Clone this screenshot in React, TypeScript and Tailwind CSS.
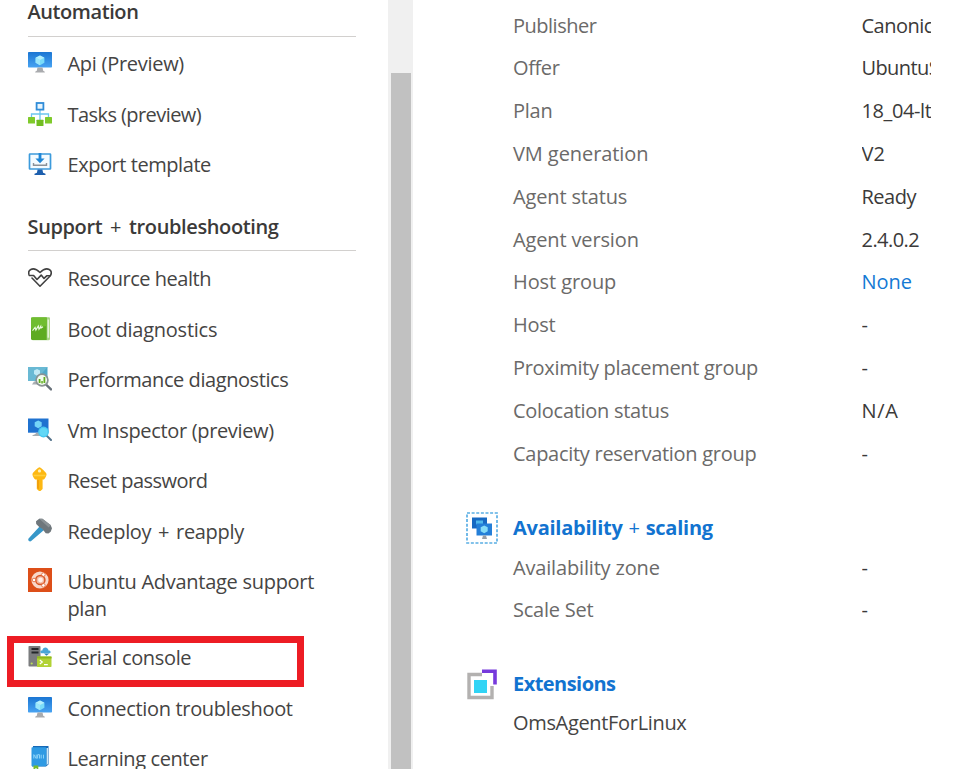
import type { ReactNode } from "react";

const svg = "mt-px h-6 w-6 shrink-0";

function MonitorIcon() {
  return (
    <svg className={svg} viewBox="0 0 24 24">
      <defs>
        <linearGradient id="screen" x1="0" y1="0" x2="0" y2="1">
          <stop offset="0" stopColor="#1b76d3" />
          <stop offset="1" stopColor="#48a3f2" />
        </linearGradient>
      </defs>
      <rect y="1" width="24" height="15.5" rx=".7" fill="url(#screen)" />
      <path d="M12 4.4l4.4 2.3v5L12 14.2l-4.4-2.5v-5z" fill="#7adcf9" />
      <path d="M7.6 6.7L12 9l4.4-2.3L12 4.4z" fill="#b4effd" />
      <path d="M12 9v5.2l-4.4-2.5v-5z" fill="#9be6fb" />
      <path d="M9.5 16.5h5l.7 3.3 1.6.9v.8H7.2v-.8l1.6-.9z" fill="#a9abae" />
    </svg>
  );
}

function TasksIcon() {
  return (
    <svg className={svg} viewBox="0 0 24 24">
      <path d="M12 8v10M3.5 16v-4h17v4" fill="none" stroke="#6cc6ee" strokeWidth="1.3" />
      <rect x="8.6" y="1" width="6.8" height="6.6" fill="#e8f5fd" stroke="#2f8cd8" strokeWidth="1.8" />
      <rect x="0" y="15" width="7" height="6.5" rx=".5" fill="#7fca2b" />
      <rect x="17" y="15" width="7" height="6.5" rx=".5" fill="#7fca2b" />
      <rect x="8.5" y="17.7" width="7" height="6.3" rx=".5" fill="#72bd22" />
    </svg>
  );
}

function ExportIcon() {
  return (
    <svg className={svg} viewBox="0 0 24 24">
      <rect x="1.5" y="2" width="21" height="15" rx=".5" fill="#f4fbff" stroke="#3c9bdc" strokeWidth="1.7" />
      <path d="M10.6 1h2.8v5.5h3.2L12 11.2 7.4 6.5h3.2z" fill="#1f86d6" />
      <path d="M5.5 11v2.3h13V11" fill="none" stroke="#8b9198" strokeWidth="1.4" />
      <path d="M9.6 17.5h4.8l.7 3.3 2.4 1V23h-11v-1.2l2.4-1z" fill="#1d5fae" />
    </svg>
  );
}

function HealthIcon() {
  return (
    <svg className={svg} viewBox="0 0 24 24" fill="none" stroke="#404040" strokeWidth="1.6" strokeLinejoin="round" strokeLinecap="round">
      <path d="M.9 8.200C.3 6.200 1 4.400 2.800 3.500c2.700-1.400 5.500-.6 9.200 3 3.700-3.600 6.500-4.400 9.200-3 2.500 1.300 3 4.500.2 7.300L12 20.200l-8-8.200" />
      <path d="M1.200 9.500h4.400l3.400 4 4.200-4.400 2.800 3.300 2.700-2.600h3.400" />
    </svg>
  );
}

function BootIcon() {
  return (
    <svg className={svg} viewBox="0 0 24 24">
      <path d="M4.5.2H21a1 1 0 011 1v20.500a1.500 1.500 0 01-1.500 1.500h-16z" fill="#a8d586" />
      <path d="M19.500 2.500h1.600v18.200h-1.600z" fill="#e4f3d7" />
      <path d="M3 1.700c0-.7.5-1.200 1.200-1.200h14.500v22.500H4.200c-.7 0-1.200-.5-1.200-1.200z" fill="#5dab20" />
      <path d="M3 12V1.700C3 1 3.500.5 4.200.5h14.500V9z" fill="#70bd30" />
      <path d="M4.500 13.600l2.600-3.200.8 2.700 2.400-4.100.7 3.300 1.800-3 .2 1.800 2-1.400" fill="none" stroke="#eefae4" strokeWidth="1.100" />
    </svg>
  );
}

function PerformanceIcon() {
  return (
    <svg className={svg} viewBox="0 0 24 24">
      <path d="M0 0h19.500v14H0z" fill="#4fa9c9" />
      <path d="M0 0h19.500L7 14H0z" fill="#69b9d4" />
      <path d="M9 2l3 1.600v3.500L9 8.700 6 7.100V3.600z" fill="#c0e9f5" />
      <path d="M4 17.500h6v-3H6z" fill="#a9afb3" />
      <path d="M17.500 17l5.500 5.400" stroke="#68717a" strokeWidth="2.400" strokeLinecap="round" />
      <circle cx="14" cy="13" r="5.900" fill="#f2fbef" stroke="#8b9395" strokeWidth="1.700" />
      <path d="M10.700 12h1.800v4h-1.800zM13.300 14h1.500v2.500h-1.500zM15.500 10h1.800v6h-1.800z" fill="#62ae22" />
    </svg>
  );
}

function InspectorIcon() {
  return (
    <svg className={svg} viewBox="0 0 24 24">
      <path d="M0 .5h20.500v14.200H0z" fill="#1f72d0" />
      <path d="M10.200 2.500l3.500 1.800v4l-3.500 2-3.500-2v-4z" fill="#74d3f7" />
      <path d="M8 14.700h5v2.500l1 .8H4.500v-.7L7.500 16z" fill="#a5acb2" />
      <path d="M19 18l4 4" stroke="#52718a" strokeWidth="2" strokeLinecap="round" />
      <circle cx="15.500" cy="14" r="5.400" fill="#46c8f0" />
      <circle cx="15.500" cy="14" r="4" fill="#61d7f6" />
    </svg>
  );
}

function KeyIcon() {
  return (
    <svg className="h-6 w-6 shrink-0" viewBox="0 0 24 24">
      <path d="M11.500.3c1 0 6.800 5.300 7 6.700.2 1.500-1.500 4.800-2.500 5.500h-1.400v9.500L12.500 24H11l-2.200-2v-9.500H7.200c-1.200-.7-2.900-4-2.700-5.500C4.700 5.600 10.500.3 11.500.3z" fill="#fdb813" />
      <path d="M9 13h2v9.500L9 21z" fill="#f2a10b" />
      <path d="M5.500 8.500h12" stroke="#ffcf3d" strokeWidth="1.600" />
      <circle cx="11.500" cy="3.900" r="1.600" fill="#fff0b5" />
    </svg>
  );
}

function HammerIcon() {
  return (
    <svg className="h-6 w-6 shrink-0" viewBox="0 0 24 24">
      <path d="M12 8l4 4L3.200 23c-.8.700-1.900.4-2.500-.3s-.6-1.800.1-2.500z" fill="#3797c9" />
      <path d="M8 3.200L11.200.8l3.200-.1 8.200 6.400 1.400 3.200-1.300 3.500-2.300 1.700-2.700-.3-3.500-4.500-3-1.800-3-3z" fill="#6f777c" />
      <path d="M11.200.8l3.200-.1 8.200 6.400-1.800 2.400z" fill="#8b9296" />
    </svg>
  );
}

function UbuntuIcon() {
  return (
    <svg className="h-6 w-6 shrink-0" viewBox="0 0 24 24">
      <rect width="24" height="24" fill="#dd4f19" />
      <circle cx="12" cy="12" r="8.600" fill="#f8d8ca" />
      <circle cx="12.300" cy="12" r="4.600" fill="#f3b79f" stroke="#d95523" strokeWidth="1.500" />
      <circle cx="12.500" cy="12" r="2.400" fill="#fff0e9" />
      <g fill="#fff" stroke="#e1622f" strokeWidth=".8">
        <circle cx="6" cy="12" r="1.800" />
        <circle cx="15.400" cy="6.600" r="1.800" />
        <circle cx="15.400" cy="17.400" r="1.800" />
      </g>
    </svg>
  );
}

function SerialIcon() {
  return (
    <svg className={svg} viewBox="0 0 24 24">
      <rect x=".5" y="1" width="12" height="20.500" rx=".8" fill="#7b7c7e" />
      <path d="M3.500 3h7v2h-7zM3.500 6.500h7v2h-7z" fill="#25282b" />
      <circle cx="3.700" cy="18.500" r="1.100" fill="#b9e05a" />
      <path d="M13.500 8.200c-1.800-.6-1.300-3 .8-2.700.4-2.500 3.200-4 5.200-2 .8.700.9 1.500.9 2 2.500-.3 3 2.700 1 2.800z" fill="#4aa6d7" />
      <path d="M16 8.500l2.500 2.300 2.700-2.300" fill="#2b83ba" />
      <rect x="9" y="11.500" width="14.500" height="10.500" rx=".7" fill="#b2d235" />
      <path d="M9 11.500h14.500v2H9z" fill="#8eb91e" />
      <path d="M11.800 15l2.500 2-2.500 2M16 19.700h3.800" fill="none" stroke="#fff" strokeWidth="1.200" />
    </svg>
  );
}

function BookIcon() {
  return (
    <svg className={svg} viewBox="0 0 24 24">
      <path d="M5 0h15.500v18.500L18 20.500H4z" fill="#1769b6" />
      <path d="M18.500 2h1.500v16l-1.500 1.200z" fill="#cceafa" />
      <rect x="3.500" y="1.300" width="14.700" height="18.900" rx=".8" fill="#2f9ae3" />
      <path d="M5.800 12.500V8.600l2.400 3.900V8.600M9.600 12.500V8.700h1.900v3.800M13.200 8.700v3.800M15.500 8.700v3.800" fill="none" stroke="#8bd2f8" strokeWidth="1" />
      <path d="M5.500 19.500h4.800V24L8 22l-2.500 2z" fill="#76bc2d" />
    </svg>
  );
}

function AvailabilityIcon() {
  return (
    <svg className="h-8 w-8 shrink-0" viewBox="0 0 32 32">
      <rect x="1" y="1" width="30" height="30" fill="none" stroke="#59aee4" strokeWidth="1.700" strokeDasharray="3 1.620" />
      <path d="M6 5.500h15v11H6z" fill="#1769c2" />
      <path d="M10 8.500h7v4h-7z" fill="#51b9ec" />
      <path d="M10.500 11.500H26v12H10.500z" fill="#247fd8" />
      <path d="M18.200 13.500l3.500 1.800v4l-3.500 2-3.500-2v-4z" fill="#85dcf8" />
      <path d="M17 23.500h3l1 3.500h-5z" fill="#989ea5" />
    </svg>
  );
}

function ExtensionsIcon() {
  return (
    <svg className="h-8 w-8 shrink-0" viewBox="0 0 32 32">
      <path d="M16 6.500H3v23h23V18" fill="none" stroke="#b3b1b0" strokeWidth="3.400" />
      <path d="M16 3.200h13v13.300" fill="none" stroke="#773adc" strokeWidth="3.600" />
      <path d="M8 12h13v13H8z" fill="#32d4f5" />
    </svg>
  );
}

function Item({ icon, children, marked }: { icon: ReactNode; children: ReactNode; marked?: boolean }) {
  return (
    <li className="relative flex min-h-[50.5px] items-start pt-[11.5px]">
      {icon}
      <span className="ml-4 leading-[27px] whitespace-nowrap">{children}</span>
      {marked && <span className="absolute top-[3px] -left-[21px] h-[51px] w-[297px] border-7 border-[#ed1c24]" />}
    </li>
  );
}

function Heading({ children }: { children: ReactNode }) {
  return <h2 className="h-[37px] w-[328.5px] border-b-[1.5px] border-[#d2d0ce] font-semibold text-[#3b3a39]">{children}</h2>;
}

function Row({ label, value, track, vtrack = "", link }: { label: string; value: string; track: string; vtrack?: string; link?: boolean }) {
  return (
    <div className="flex h-[42.8px] items-center leading-[27px] whitespace-nowrap">
      <dt className={`w-[348.5px] shrink-0 text-[#6b6a69] ${track}`}>{label}</dt>
      <dd className={`w-[69.5px] overflow-hidden ${link ? "text-[#1479d4]" : "text-[#3b3a39]"} ${vtrack}`}>{value}</dd>
    </div>
  );
}

export default function App() {
  return (
    <div className="flex h-[769px] w-[974px] overflow-hidden bg-white font-['Open_Sans','Noto_Sans',sans-serif] text-[20px] text-[#454443]">
      <nav className="w-[388px] shrink-0 pl-[27.5px]">
        <Heading><span className="block leading-[24px] tracking-[-0.42px]">Automation</span></Heading>
        <ul className="pt-[1.5px]">
          <Item icon={<MonitorIcon />}><span className="tracking-[-0.28px]">Api (Preview)</span></Item>
          <Item icon={<TasksIcon />}><span className="tracking-[-0.57px]">Tasks (preview)</span></Item>
          <Item icon={<ExportIcon />}><span className="tracking-[-0.44px]">Export template</span></Item>
        </ul>
        <div className="pt-[23.5px]">
          <Heading>
            <span className="block leading-[25px] tracking-[-0.37px]">
              Support <span className="mx-[3px] font-normal">+</span> troubleshooting
            </span>
          </Heading>
        </div>
        <ul className="pt-[3px]">
          <Item icon={<HealthIcon />}><span className="tracking-[-0.48px]">Resource health</span></Item>
          <Item icon={<BootIcon />}><span className="tracking-[-0.25px]">Boot diagnostics</span></Item>
          <Item icon={<PerformanceIcon />}><span className="tracking-[-0.43px]">Performance diagnostics</span></Item>
          <Item icon={<InspectorIcon />}><span className="tracking-[-0.34px]">Vm Inspector (preview)</span></Item>
          <Item icon={<KeyIcon />}><span className="tracking-[-0.5px]">Reset password</span></Item>
          <Item icon={<HammerIcon />}>
            <span className="tracking-[-0.33px]">Redeploy <span className="mx-[2px]">+</span> reapply</span>
          </Item>
          <Item icon={<UbuntuIcon />}>
            <span className="block h-[64.5px]">
              <span className="tracking-[-0.28px]">Ubuntu Advantage support</span>
              <br />
              <span className="tracking-[-0.42px]">plan</span>
            </span>
          </Item>
          <Item icon={<SerialIcon />} marked><span className="tracking-[-0.34px]">Serial console</span></Item>
          <Item icon={<MonitorIcon />}><span className="tracking-[-0.33px]">Connection troubleshoot</span></Item>
          <Item icon={<BookIcon />}><span className="tracking-[-0.4px]">Learning center</span></Item>
        </ul>
      </nav>
      <div className="w-[25px] shrink-0 bg-[#f0f0f0] px-[2.5px] pt-[73px]">
        <div className="h-full bg-[#c1c1c1]" />
      </div>
      <main className="flex-1 pt-[3.8px] pl-[52.5px]">
        <dl className="pl-[47.5px]">
          <Row label="Publisher" track="tracking-[-0.5px]" value="Canonical" vtrack="tracking-[-0.5px]" />
          <Row label="Offer" track="tracking-[-0.38px]" value="UbuntuServer" vtrack="tracking-[-0.6px]" />
          <Row label="Plan" track="tracking-[-0.24px]" value="18_04-lts-gen2" vtrack="tracking-[-0.4px]" />
          <Row label="VM generation" track="tracking-[-0.08px]" value="V2" />
          <Row label="Agent status" track="tracking-[-0.15px]" value="Ready" vtrack="tracking-[-0.49px]" />
          <Row label="Agent version" track="tracking-[-0.14px]" value="2.4.0.2" vtrack="tracking-[-0.55px]" />
          <Row label="Host group" track="tracking-[-0.1px]" value="None" link />
          <Row label="Host" track="tracking-[-0.23px]" value="-" />
          <Row label="Proximity placement group" track="tracking-[-0.31px]" value="-" />
          <Row label="Colocation status" track="tracking-[-0.28px]" value="N/A" vtrack="tracking-[0.65px]" />
          <Row label="Capacity reservation group" track="tracking-[-0.28px]" value="-" />
        </dl>
        <section className="pt-[37.2px]">
          <h3 className="flex h-8 items-center font-bold text-[#1273d0]">
            <AvailabilityIcon />
            <span className="ml-[15.5px] leading-[27px] tracking-[-0.25px]">
              Availability <span className="mx-px font-normal">+</span> scaling
            </span>
          </h3>
          <dl className="pt-[2px] pl-[47.5px]">
            <Row label="Availability zone" track="tracking-[-0.17px]" value="-" />
            <Row label="Scale Set" track="tracking-[-0.22px]" value="-" />
          </dl>
        </section>
        <section className="pt-[36.5px]">
          <h3 className="flex h-8 items-center font-bold text-[#1273d0]">
            <ExtensionsIcon />
            <span className="ml-[15.5px] leading-[27px] tracking-[-0.54px]">Extensions</span>
          </h3>
          <p className="mt-[9.5px] pl-[47.5px] leading-[27px] tracking-[-0.33px]">OmsAgentForLinux</p>
        </section>
      </main>
    </div>
  );
}
